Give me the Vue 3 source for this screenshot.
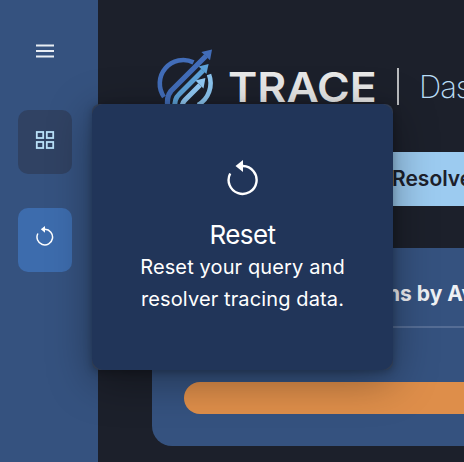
<script setup>
const title = 'Reset'
</script>

<template>
  <div class="app">
    <aside class="sidebar">
      <button class="menu" aria-label="Menu">
        <svg width="20" height="16" viewBox="0 0 20 16"><path d="M1 2.4h18M1 8h18M1 13.6h18" stroke="#e8edf4" stroke-width="2" /></svg>
      </button>
      <button class="tile grid" aria-label="Dashboard">
        <svg width="20" height="20" viewBox="0 0 20 20" fill="none" stroke="#b9e0f8" stroke-width="1.8">
          <rect x="1.8" y="2" width="6.4" height="6" /><rect x="11.8" y="2" width="6.4" height="6" />
          <rect x="1.8" y="12" width="6.4" height="6" /><rect x="11.8" y="12" width="6.4" height="6" />
        </svg>
      </button>
      <button class="tile reset" aria-label="Reset">
        <svg width="18" height="20" viewBox="0 0 32 36"><path d="M3.2 13.5A14 14 0 1 0 16 6" fill="none" stroke="#fff" stroke-width="2.7" /><path d="M8.5 6 16 0v12z" fill="#fff" /></svg>
      </button>
    </aside>
    <main class="main">
      <header class="header">
        <svg class="logo" width="58" height="66" viewBox="0 0 58 66" fill="none">
          <path d="M7 47A23.5 23.5 0 0 1 36.5 12.4" stroke="#426db9" stroke-width="4.6" />
          <path d="M52 24.5A25 25 0 0 1 41 55" stroke="#8bc5ef" stroke-width="4.6" />
          <path d="M11 58Q9 47 14 41L49 6" stroke="#426db9" stroke-width="5.2" />
          <path d="M55 -.4 53 10.2 44.4 2z" fill="#426db9" />
          <path d="M18 58Q17 49 22 44.5L46 20.5" stroke="#5da2d8" stroke-width="5" />
          <path d="M51.6 14 49.4 24 41.6 16.6z" fill="#5da2d8" />
          <path d="M26 60Q24 54 28 50L43 35" stroke="#91c9f4" stroke-width="5" />
          <path d="M48.4 28 46.5 38.4 38.4 30.4z" fill="#91c9f4" />
        </svg>
        <span class="brand">TRACE</span>
        <span class="divider"></span>
        <span class="page">Dashboard</span>
      </header>
      <div class="tab">Resolvers</div>
      <section class="panel">
        <h2>ns by Average</h2>
        <div class="bar"></div>
      </section>
    </main>
    <div class="tooltip">
      <div class="tip">
        <svg width="32" height="36" viewBox="0 0 32 36"><path d="M3.2 13.5A14 14 0 1 0 16 6" fill="none" stroke="#fff" stroke-width="2.4" /><path d="M8.5 6 16 0v12z" fill="#fff" /></svg>
        <h3>{{ title }}</h3>
        <p>Reset your query and<br>resolver tracing data.</p>
      </div>
    </div>
  </div>
</template>

<style>
body { background: #1c202b; overflow: hidden; }
</style>
<style scoped>
* { box-sizing: border-box; }
.app { width: 464px; height: 462px; display: flex; position: relative; overflow: hidden; font-family: Inter, sans-serif; background: #1c202b; }
.sidebar { width: 98px; flex: none; background: #35527f; display: flex; flex-direction: column; padding: 43px 26px 0 18px; }
button { border: 0; padding: 0; background: none; display: flex; justify-content: center; }
.menu { height: 16px; margin-bottom: 51px; }
.menu svg, .tile svg { display: block; }
.tile { width: 54px; height: 64px; border-radius: 10px; }
.grid { background: #304263; padding-top: 20px; }
.reset { background: #3d6cad; margin-top: 34px; padding-top: 18px; }
.main { flex: none; width: 600px; padding: 50px 0 0 54px; }
.header { height: 102px; display: flex; align-items: flex-start; }
.logo { flex: none; margin-left: 5px; overflow: visible; }
.brand { width: 150px; margin: 12px 0 0 13px; font-size: 41px; line-height: 50px; font-weight: 600; transform: scaleX(1.085); transform-origin: left; color: #e8e8e8; }
.divider { width: 2px; height: 37px; margin: 18px 0 0 19px; background: #b9bbbe; }
.page { margin: 18px 0 0 20px; font-size: 31px; line-height: 38px; font-weight: 200; color: #b9dcf5; letter-spacing: -1px; }
.tab { height: 54px; background: #9ccbf0; color: #1c202b; padding-left: 240px; font-size: 21px; line-height: 54px; font-weight: 600; }
.panel { height: 198px; margin-top: 42px; border-radius: 20px; background: #35527f; padding: 32px 0 32px 32px; }
h2 { margin: 0; height: 48px; padding-left: 203px; border-bottom: 2px solid #556d95; color: #eef0f4; font-size: 21px; line-height: 27px; font-weight: 700; white-space: nowrap; }
.bar { height: 32px; margin-top: 54px; border-radius: 16px; background: #de8e4a; }
.tooltip { position: absolute; left: 92px; top: 104px; width: 301px; height: 266px; border-radius: 8px; background: #303c52; box-shadow: 0 10px 44px rgba(0,0,0,.36), 0 2px 8px rgba(0,0,0,.25); }
.tip { height: 100%; border-radius: 12px; background: #213559; color: #fff; display: flex; flex-direction: column; align-items: center; padding-top: 56px; }
h3 { margin: 22px 0 0; font-size: 26px; line-height: 34px; font-weight: 400; letter-spacing: -.6px; }
p { margin: -1px 0 0; font-size: 20px; line-height: 32px; text-align: center; letter-spacing: .12px; }
</style>
